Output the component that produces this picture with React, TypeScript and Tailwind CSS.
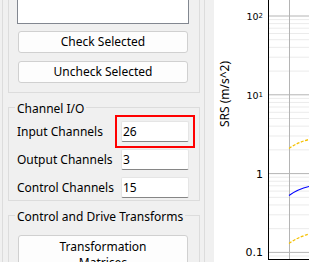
import React from "react";

const DEC = 78.8;
const TOP = 16;

const majors = [0, 1, 2, 3].map((i) => TOP + i * DEC);
const minors: number[] = [];
for (let i = 0; i < 4; i++) {
  const base = TOP + (i + 1) * DEC;
  for (let k = 2; k <= 9; k++) {
    const y = base - Math.log10(k) * DEC;
    if (y > 0 && y < 259) minors.push(y);
  }
}

const Field = ({ value }: { value: string }) => (
  <div className="w-[68px] h-[21px] bg-white border border-[#e5e5e5] border-b-[#868686] rounded-[2px] pl-[1px] leading-[19px]">
    {value}
  </div>
);

const Row = ({ label, children }: { label: string; children: React.ReactNode }) => (
  <div className="flex items-center h-[21px] pl-[8px]">
    <div className="w-[104px] whitespace-nowrap">{label}</div>
    {children}
  </div>
);

const Chart = () => (
  <svg width="95" height="262" className="block">
    <rect x="0" y="0" width="95" height="262" fill="#ffffff" />
    {minors.map((y, i) => (
      <line key={i} x1="55" x2="95" y1={y} y2={y} stroke="#ebebeb" strokeWidth="1" />
    ))}
    {majors.map((y, i) => (
      <line key={i} x1="55" x2="95" y1={y} y2={y} stroke="#b4b4b4" strokeWidth="1" />
    ))}
    <line x1="75.5" x2="75.5" y1="0" y2="259" stroke="#b4b4b4" strokeWidth="1" />
    <path d="M75 148.5 Q84 142 95 139.5" fill="none" stroke="#f5c000" strokeWidth="1.3" strokeDasharray="3 1.5" />
    <path d="M75 195.5 Q84 189 95 186.5" fill="none" stroke="#0000ff" strokeWidth="1.2" />
    <path d="M75 243.5 Q84 237 95 234" fill="none" stroke="#f5c000" strokeWidth="1.3" strokeDasharray="3 1.5" />
    <line x1="54.5" x2="54.5" y1="0" y2="259.5" stroke="#000" strokeWidth="1" />
    <line x1="54" x2="95" y1="259.5" y2="259.5" stroke="#000" strokeWidth="1" />
    <g fontFamily="'DejaVu Sans', sans-serif" fill="#000" textAnchor="end">
      <text x="49" y="20" fontSize="9.5">
        10<tspan fontSize="7" dy="-2">2</tspan>
      </text>
      <text x="49" y="99" fontSize="9.5">
        10<tspan fontSize="7" dy="-2">1</tspan>
      </text>
      <text x="49" y="178" fontSize="11">1</text>
      <text x="49" y="256" fontSize="11">0.1</text>
    </g>
    <text
      transform="translate(15 94) rotate(-90)"
      textAnchor="middle"
      fontFamily="'Noto Sans', sans-serif"
      fontSize="12"
      fill="#000"
    >
      SRS (m/s^2)
    </text>
  </svg>
);

export default function App() {
  return (
    <div className="w-[309px] h-[262px] overflow-hidden bg-[#f0f0f0] flex font-['Noto_Sans',sans-serif] text-[12px] text-black">
      <div className="ml-[2px] w-[203px] h-full shrink-0 border-x border-[#dcdcdc] pl-[5px]">
        <div className="w-[192px] -mt-[50px] pt-[10px] pb-[9px] border-x border-b border-[#dcdcdc]">
          <div className="ml-[8px] w-[172px] h-[64px] bg-white border border-[#828790]" />
          <button className="ml-[9px] mt-[7px] w-[170px] h-[22px] bg-[#fdfdfd] border border-[#d0d0d0] rounded-[3px] flex items-center justify-center">
            Check Selected
          </button>
          <button className="ml-[9px] mt-[8px] w-[170px] h-[22px] bg-[#fdfdfd] border border-[#d0d0d0] rounded-[3px] flex items-center justify-center">
            Uncheck Selected
          </button>
        </div>

        <fieldset className="w-[192px] mt-[6px] border border-[#dcdcdc] pt-[6px] pb-[2px] flex flex-col gap-[7px]">
          <legend className="ml-[6px] px-[2px] leading-[16px]">
            <span className="relative top-[2px]">Channel I/O</span>
          </legend>
          <Row label="Input Channels">
            <div className="-m-[6px] border-2 border-[#ff0000] p-[4px]">
              <Field value="26" />
            </div>
          </Row>
          <Row label="Output Channels">
            <Field value="3" />
          </Row>
          <Row label="Control Channels">
            <Field value="15" />
          </Row>
        </fieldset>

        <fieldset className="w-[192px] mt-[6px] border border-[#dcdcdc] pt-[12px] pb-[8px]">
          <legend className="ml-[6px] px-[2px] leading-[16px] whitespace-nowrap">
            <span className="relative top-[2px]">Control and Drive Transforms</span>
          </legend>
          <button className="ml-[9px] w-[170px] h-[40px] bg-[#fdfdfd] border border-[#d0d0d0] rounded-[3px] flex flex-col items-center justify-center leading-[16px]">
            <span>Transformation</span>
            <span>Matrices</span>
          </button>
        </fieldset>
      </div>
      <div className="ml-[9px] shrink-0">
        <Chart />
      </div>
    </div>
  );
}
